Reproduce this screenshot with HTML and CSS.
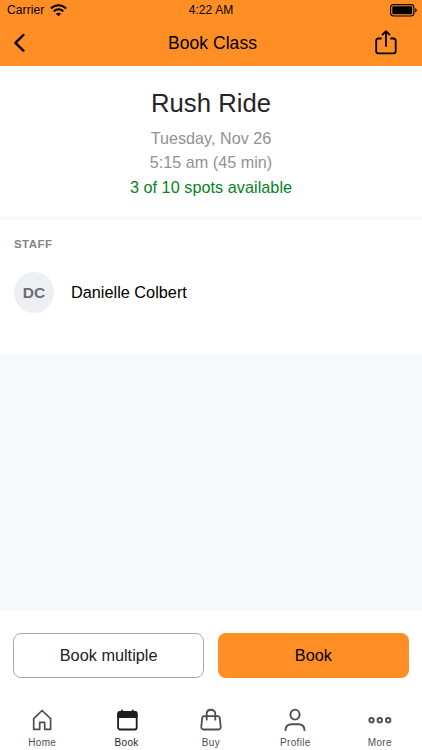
FILE: index.html
```html
<!DOCTYPE html>
<html lang="en">
<head>
<meta charset="utf-8">
<title>Book Class</title>
<link rel="stylesheet" href="styles.css">
</head>
<body>
<div class="app">
  <header class="header">
    <div class="status">
      <div class="carrier"><span>Carrier</span>
        <svg class="wifi" width="17" height="13" viewBox="0 0 17 13" fill="none" stroke="#000" stroke-width="1.9"><path d="M.9 4.5C5.2.1 11.8.1 16.1 4.5M3.7 7.3c2.7-2.8 6.9-2.8 9.6 0"/><path d="M8.5 12.2 5.9 9.7c1.5-1.3 3.7-1.3 5.2 0z" fill="#000" stroke="none"/></svg>
      </div>
      <time class="clock">4:22 AM</time>
      <svg class="battery" width="28" height="13" viewBox="0 0 28 13"><rect x=".6" y=".6" width="23.3" height="11.4" rx="3" fill="none" stroke="#000" stroke-width="1.1"/><rect x="2.3" y="2.3" width="19.9" height="8" rx="1.3"/><path d="M25.2 4.2c2.1.7 2.1 3.5 0 4.2z"/></svg>
    </div>
    <div class="nav">
      <svg class="back" width="12" height="20" viewBox="0 0 12 20" fill="none" stroke="#000" stroke-width="2.4" stroke-linecap="round" stroke-linejoin="round"><path d="M10.400 2 2.400 9.800l8 7.900"/></svg>
      <h1 class="nav-title">Book Class</h1>
      <svg class="share" width="22" height="26" viewBox="0 0 22 26" fill="none" stroke="#000" stroke-width="1.8" stroke-linecap="round" stroke-linejoin="round"><path d="M6 8.500H3.200c-1.3 0-2 .7-2 2v10.800c0 1.3.7 2 2 2h15.500c1.3 0 2-.7 2-2V10.500c0-1.3-.7-2-2-2H16M11 16V1.300M7.500 4.700 11 1.200l3.500 3.500"/></svg>
    </div>
  </header>
  <section class="summary">
    <h2 class="class-name">Rush Ride</h2>
    <p class="date">Tuesday, Nov 26</p>
    <p class="hours">5:15 am (45 min)</p>
    <p class="spots">3 of 10 spots available</p>
  </section>
  <section class="staff">
    <h3 class="staff-title">STAFF</h3>
    <div class="person"><span class="avatar">DC</span><span class="person-name">Danielle Colbert</span></div>
  </section>
  <div class="spacer"></div>
  <div class="actions">
    <button class="button outline">Book multiple</button>
    <button class="button primary">Book</button>
  </div>
  <nav class="tabs">
    <a class="tab"><svg width="24" height="24" viewBox="0 0 24 24" fill="none" stroke="#4d4d54" stroke-width="1.7" stroke-linejoin="round"><path d="M3.700 10.700 12.100 2.500l8.500 8.200v10.600h-5.900v-6.900H9.700v6.900h-6z"/></svg><span>Home</span></a>
    <a class="tab active"><svg width="24" height="24" viewBox="0 0 24 24" fill="none" stroke="#1e1e22" stroke-width="1.800" stroke-linecap="round"><rect x="3.100" y="4" width="18.600" height="17.500" rx="2"/><path d="M3.100 9.200V6c0-1.300.7-2 2-2h14.600c1.300 0 2 .7 2 2v3.200z" fill="#1e1e22" stroke-linejoin="round" stroke-width="1.800"/><path d="M7 4V2.300M17.800 4V2.300"/></svg><span>Book</span></a>
    <a class="tab"><svg width="24" height="24" viewBox="0 0 24 24" fill="none" stroke="#4d4d54" stroke-width="1.8" stroke-linecap="round" stroke-linejoin="round"><path d="M5 8.200h14c1 0 1.500.5 1.700 1.500l1 8.700c.3 2.100-.6 3.100-2.400 3.100H4.700c-1.800 0-2.700-1-2.400-3.100l1-8.700C3.500 8.700 4 8.200 5 8.200zM7.700 11.700V5.700c0-5.300 8.600-5.300 8.600 0v6"/></svg><span>Buy</span></a>
    <a class="tab"><svg width="24" height="24" viewBox="0 0 24 24" fill="none" stroke="#4d4d54" stroke-width="1.9" stroke-linecap="round"><ellipse cx="12" cy="6.600" rx="4.600" ry="5"/><path d="M2.500 22.100c.2-4 2.500-5.900 6.100-5.900h6.800c3.600 0 5.900 1.900 6.100 5.900"/></svg><span>Profile</span></a>
    <a class="tab"><svg width="24" height="24" viewBox="0 0 24 24" fill="none" stroke="#4d4d54" stroke-width="1.9"><circle cx="3.500" cy="12.200" r="2.200"/><circle cx="11.800" cy="12.200" r="2.200"/><circle cx="20.200" cy="12.200" r="2.200"/></svg><span>More</span></a>
  </nav>
</div>
</body>
</html>
```
FILE: styles.css
```css
* { box-sizing: border-box; }
body { margin: 0; font-family: "Liberation Sans", sans-serif; color: #000; background: #fff; }
h1, h2, h3, p { margin: 0; font-weight: 400; }
svg { display: block; }
.app { display: flex; flex-direction: column; width: 422px; height: 750px; }
.header { height: 66px; background: #ff8f24; }
.status { display: grid; grid-template-columns: 1fr auto 1fr; align-items: center; height: 20px; padding: 0 4px 0 7px; }
.carrier { display: flex; align-items: center; gap: 6px; font-size: 12px; letter-spacing: .1px; }
.clock { margin-right: 3px; font-size: 12px; letter-spacing: .1px; }
.battery { justify-self: end; }
.nav { display: grid; grid-template-columns: 1fr auto 1fr; align-items: center; height: 46px; padding: 0 25px 0 13px; }
.nav-title { margin-left: 15px; font-size: 17.500px; line-height: 24px; letter-spacing: .05px; }
.share { justify-self: end; margin-bottom: 1px; }
.summary { height: 150px; padding-top: 20px; text-align: center; color: #929292; font-size: 16.200px; line-height: 24.500px; }
.class-name { margin-bottom: 5.500px; font-size: 25.700px; line-height: 34px; color: #252527; }
.spots { color: #087f23; letter-spacing: .05px; }
.staff { height: 138px; padding: 17px 14px 0; border-top: 4px solid #f7f8fb; }
.staff-title { font-size: 11.500px; line-height: 14px; font-weight: 700; letter-spacing: .45px; color: #858585; }
.person { display: flex; align-items: center; gap: 17px; margin-top: 21px; }
.avatar { display: flex; align-items: center; justify-content: center; width: 40px; height: 41px; border-radius: 50%; background: #eeeff2; color: #6d6d73; font-size: 15.500px; font-weight: 700; }
.person-name { font-size: 16.300px; }
.spacer { flex: 1; background: #f7f8fb; }
.actions { display: grid; grid-template-columns: 1fr 1fr; gap: 13.500px; height: 90px; padding: 22px 13px 23px; }
.button { border-radius: 8px; font: 16.300px "Liberation Sans", sans-serif; color: #000; padding: 0; }
.outline { border: 1px solid #aaa; background: #fff; color: #222; }
.primary { border: 0; background: #ff8f24; }
.tabs { display: grid; grid-template-columns: repeat(5, 1fr); height: 49px; }
.tab { display: flex; flex-direction: column; align-items: center; padding-top: 7px; font-size: 10px; line-height: 14px; letter-spacing: .35px; color: #4d4d54; }
.tab span { margin-top: 4px; }
.active { color: #1e1e22; }
```
